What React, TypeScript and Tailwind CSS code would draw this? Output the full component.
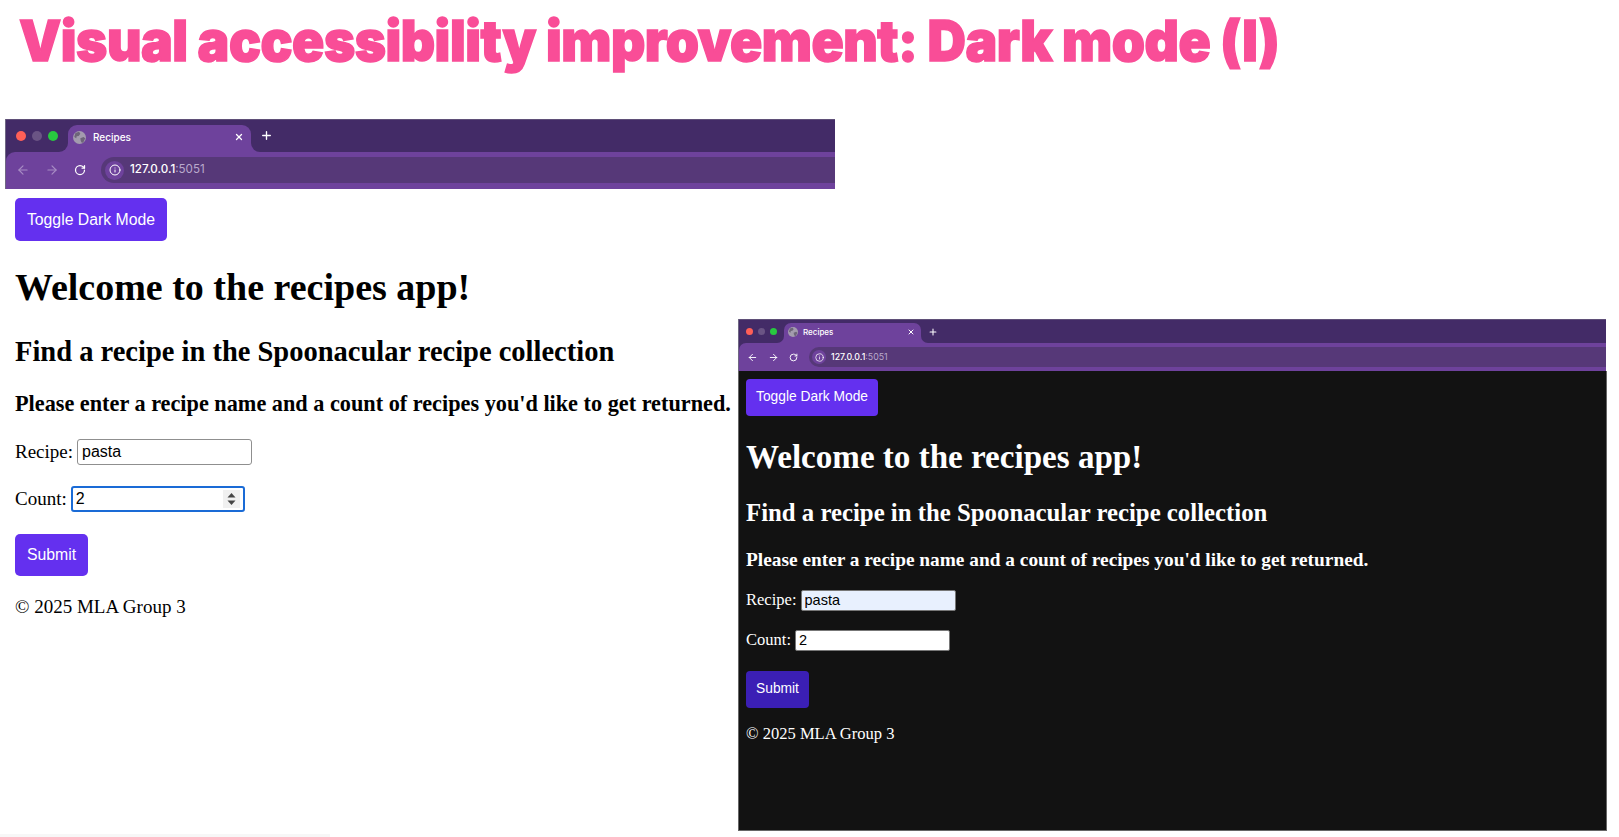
import { ArrowLeft, ArrowRight, Info, Plus, RotateCw, X } from "lucide-react";

const light = {
  frame: "left-[5px] top-[119px] w-[830px] h-[70px]",
  top: "h-[33px] pl-[10px]",
  dots: "gap-[6px] w-[52px]",
  dot: "size-[10px]",
  tab: "w-[183px] h-[27px] rounded-t-[9px] pl-[5px] pr-[7px] pb-[3px] text-[10px]",
  corner: "size-[9px]",
  cornerL: "rounded-br-[9px]",
  cornerR: "rounded-bl-[9px]",
  globe: 13,
  titleGap: "ml-[7px]",
  close: 10,
  plus: 13,
  plusBox: "ml-[9px] mt-[-1px]",
  toolbar: "h-[37px] rounded-tl-[9px] pt-[5px] pb-[6px] pl-[10px]",
  nav: "gap-[15px] w-[85px]",
  navIcon: 14,
  reload: 12,
  address: "h-[26px] pl-[4px] text-[11.6px] gap-[6px]",
  infoBox: "size-[19px]",
  info: 12,
};

const dark = {
  frame: "left-[738px] top-[319px] w-[868px] h-[52px]",
  top: "h-[24px] pl-[7px]",
  dots: "gap-[5px] w-[38px]",
  dot: "size-[7px]",
  tab: "w-[137px] h-[20px] rounded-t-[7px] pl-[4px] pr-[6px] pb-[2px] text-[8px]",
  corner: "size-[7px]",
  cornerL: "rounded-br-[7px]",
  cornerR: "rounded-bl-[7px]",
  globe: 10,
  titleGap: "ml-[5px]",
  close: 8,
  plus: 10,
  plusBox: "ml-[7px]",
  toolbar: "h-[28px] rounded-tl-[7px] pt-[4px] pb-[4px] pl-[8px]",
  nav: "gap-[10px] w-[62px]",
  navIcon: 11,
  reload: 9,
  address: "h-[20px] pl-[3px] text-[8.8px] gap-[5px]",
  infoBox: "size-[14px]",
  info: 9,
};

function GlobeIcon({ size }: { size: number }) {
  return (
    <svg className="shrink-0" width={size} height={size} viewBox="0 0 16 16">
      <circle cx="8" cy="8" r="8" fill="#a39bae" />
      <path d="M3 2.500 7.500 1 9 3.500 7 6 4.500 6.500 4 9 1.500 7.500ZM9 9l4-1.500 2 1.500-2.500 5.500-2-.5L9.500 12Z" fill="#6d6578" />
    </svg>
  );
}

function BrowserBar({ c, navDim }: { c: typeof light; navDim: string }) {
  return (
    <div className={`absolute ${c.frame} border-l border-[#6f6783] font-['Inter',sans-serif] text-white overflow-hidden`}>
      <div className={`flex items-end bg-[#432b67] border-t border-[#5f4f78] ${c.top}`}>
        <div className={`flex self-center ${c.dots}`}>
          <span className={`rounded-full bg-[#ff5f57] ${c.dot}`} />
          <span className={`rounded-full bg-[#6a5484] ${c.dot}`} />
          <span className={`rounded-full bg-[#28c840] ${c.dot}`} />
        </div>
        <div className={`relative flex items-center bg-[#6e429c] ${c.tab}`}>
          <span className={`absolute bottom-0 right-full bg-[#6e429c] ${c.corner}`}>
            <span className={`block size-full bg-[#432b67] ${c.cornerL}`} />
          </span>
          <GlobeIcon size={c.globe} />
          <span className={`font-medium grow ${c.titleGap}`}>Recipes</span>
          <X size={c.close} strokeWidth={3} />
          <span className={`absolute bottom-0 left-full bg-[#6e429c] ${c.corner}`}>
            <span className={`block size-full bg-[#432b67] ${c.cornerR}`} />
          </span>
        </div>
        <div className={`self-center ${c.plusBox}`}>
          <Plus size={c.plus} strokeWidth={2.5} />
        </div>
      </div>
      <div className="bg-[#432b67]">
        <div className={`flex items-center bg-[#6e429c] ${c.toolbar}`}>
          <div className={`flex items-center shrink-0 ${c.nav}`}>
            <ArrowLeft size={c.navIcon} className={navDim} />
            <ArrowRight size={c.navIcon} className={navDim} />
            <RotateCw size={c.reload} strokeWidth={2.5} />
          </div>
          <div className={`flex items-center grow bg-[#563878] rounded-l-full ${c.address}`}>
            <span className={`flex items-center justify-center rounded-full bg-[#6e429c] ${c.infoBox}`}>
              <Info size={c.info} />
            </span>
            <span className="font-medium">
              127.0.0.1<span className="text-[#b9a9cc] font-normal">:5051</span>
            </span>
          </div>
        </div>
      </div>
    </div>
  );
}

function Spinner() {
  return (
    <svg className="absolute right-[5px] top-[4px] bg-[#f0f0f0]" width="17" height="18" viewBox="0 0 17 18">
      <path d="M8.500 3 12.500 7.500h-8z" fill="#444" />
      <path d="M8.500 15 12.500 10.500h-8z" fill="#444" />
    </svg>
  );
}

export default function App() {
  return (
    <div className="relative w-[1619px] h-[837px] bg-white overflow-hidden font-['Liberation_Serif',serif]">
      <h1 className="pl-[20px] pt-[9px] w-[1619px] whitespace-nowrap origin-left scale-x-[0.95] tracking-[-0.5px] text-[#f94d97] text-[56px] leading-[64px] font-black font-['Inter',sans-serif] [-webkit-text-stroke:1.5px_#f94d97]">
        Visual accessibility improvement: Dark mode (I)
      </h1>

      <BrowserBar c={light} navDim="text-[#a78cc4]" />

      {/* light version */}
      <div className="absolute left-[5px] top-[189px] w-[730px] pl-[10px] pt-[9px] text-black text-[19px]">
        <button className="block w-[152px] h-[43px] rounded-[5px] bg-[#6430ef] text-white text-[15.800px] font-['Liberation_Sans',sans-serif]">
          Toggle Dark Mode
        </button>
        <h1 className="mt-[24px] text-[38px] leading-[44px] font-bold">Welcome to the recipes app!</h1>
        <h2 className="mt-[26px] text-[28.500px] leading-[33px] font-bold">Find a recipe in the Spoonacular recipe collection</h2>
        <h3 className="mt-[23px] text-[22.260px] leading-[26px] font-bold whitespace-nowrap">
          Please enter a recipe name and a count of recipes you'd like to get returned.
        </h3>
        <div className="mt-[22px] flex items-center h-[26px] gap-[4px]">
          <label>Recipe:</label>
          <input
            readOnly
            value="pasta"
            className="w-[175px] h-[26px] px-[4px] rounded-[3px] border border-[#8f8f8f] text-[16px] font-['Liberation_Sans',sans-serif]"
          />
        </div>
        <div className="mt-[21px] flex items-center h-[26px] gap-[4px]">
          <label>Count:</label>
          <div className="relative">
            <input
              readOnly
              type="number"
              value="2"
              className="block w-[174px] h-[26px] px-[3px] rounded-[3px] border-2 border-[#1a6bd6] text-[16px] font-['Liberation_Sans',sans-serif] [appearance:textfield]"
            />
            <Spinner />
          </div>
        </div>
        <button className="block mt-[22px] w-[73px] h-[42px] rounded-[5px] bg-[#6430ef] text-white text-[15.800px] font-['Liberation_Sans',sans-serif]">
          Submit
        </button>
        <p className="mt-[20px] leading-[21px]">© 2025 MLA Group 3</p>
      </div>

      <BrowserBar c={dark} navDim="text-white" />

      {/* dark version */}
      <div className="absolute left-[738px] top-[371px] w-[869px] h-[460px] bg-[#121212] border-l border-r border-b border-[#666] pl-[7px] pt-[8px] text-white text-[16.550px]">
        <button className="block w-[132px] h-[37px] rounded-[4px] bg-[#6430ef] text-[13.800px] font-['Liberation_Sans',sans-serif]">
          Toggle Dark Mode
        </button>
        <h1 className="mt-[22px] text-[33.100px] leading-[38px] font-bold">Welcome to the recipes app!</h1>
        <h2 className="mt-[22px] text-[24.800px] leading-[29px] font-bold">Find a recipe in the Spoonacular recipe collection</h2>
        <h3 className="mt-[21px] text-[19.350px] leading-[23px] font-bold whitespace-nowrap">
          Please enter a recipe name and a count of recipes you'd like to get returned.
        </h3>
        <div className="mt-[19px] flex items-center h-[21px] gap-[4px]">
          <label>Recipe:</label>
          <input
            readOnly
            value="pasta"
            className="w-[155px] h-[21px] px-[3px] rounded-[2px] border border-[#777] bg-[#e8f0fe] text-black text-[14.500px] font-['Liberation_Sans',sans-serif]"
          />
        </div>
        <div className="mt-[19px] flex items-center h-[21px] gap-[4px]">
          <label>Count:</label>
          <input
            readOnly
            type="number"
            value="2"
            className="w-[155px] h-[21px] px-[3px] rounded-[2px] border border-[#777] bg-white text-black text-[14.500px] font-['Liberation_Sans',sans-serif] [appearance:textfield]"
          />
        </div>
        <button className="block mt-[20px] w-[63px] h-[37px] rounded-[4px] bg-[#3b1fb5] text-[13.800px] font-['Liberation_Sans',sans-serif]">
          Submit
        </button>
        <p className="mt-[16px] leading-[19px]">© 2025 MLA Group 3</p>
      </div>

      {/* faint edge at the bottom of the slide */}
      <div className="absolute left-0 bottom-0 w-[330px] h-[3px] bg-[#f7f7f7]" />
    </div>
  );
}
